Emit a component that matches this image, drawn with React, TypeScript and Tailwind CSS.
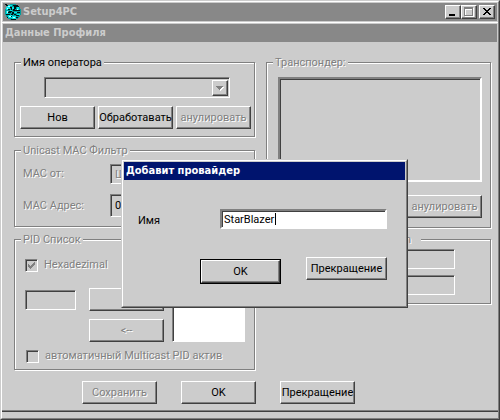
import { useState } from 'react';
import type { ButtonHTMLAttributes, InputHTMLAttributes, ReactNode } from 'react';
import clsx from 'clsx';

const etched = 'text-[#808080] [text-shadow:1px_1px_0_#fff]';
const sunken =
  'border border-t-[#808080] border-l-[#808080] border-r-white border-b-white shadow-[inset_1px_1px_0_#404040]';
const raised =
  'border border-t-white border-l-white border-r-[#404040] border-b-[#404040] shadow-[inset_-1px_-1px_0_#808080]';
const deep =
  'border-2 border-t-[#808080] border-l-[#808080] border-r-white border-b-white shadow-[inset_1px_1px_0_#404040]';

function Button({ className, disabled, ...props }: ButtonHTMLAttributes<HTMLButtonElement>) {
  return (
    <button
      type="button"
      disabled={disabled}
      className={clsx(
        'flex h-[23px] shrink-0 items-center justify-center whitespace-nowrap bg-[#ccc]',
        raised,
        disabled && etched,
        className ?? 'w-[75px]'
      )}
      {...props}
    />
  );
}

function Field({ className, ...props }: InputHTMLAttributes<HTMLInputElement>) {
  return <input type="text" className={clsx('bg-[#ccc] px-1 outline-none', sunken, className)} {...props} />;
}

interface GroupProps {
  title: ReactNode;
  disabled?: boolean;
  className?: string;
  children: ReactNode;
}

function Group({ title, disabled, className, children }: GroupProps) {
  return (
    <fieldset
      className={clsx(
        'min-w-0 border border-[#808080] shadow-[1px_1px_0_#fff,inset_1px_1px_0_#fff]',
        className
      )}
    >
      <legend className={clsx('ml-1.5 bg-[#ccc] px-0.5 leading-[15px]', disabled && etched)}>{title}</legend>
      {children}
    </fieldset>
  );
}

function Check({ label, checked = false, id }: { label: string; checked?: boolean; id: string }) {
  return (
    <div className="flex items-center gap-1.5">
      <span className="relative flex size-[13px] shrink-0">
        <input
          id={id}
          type="checkbox"
          defaultChecked={checked}
          disabled
          className={clsx('size-[13px] appearance-none bg-[#ccc]', sunken)}
        />
        {checked && (
          <svg viewBox="0 0 13 13" className="absolute inset-0 size-[13px]" shapeRendering="crispEdges">
            <path
              d="M3 5h1v3H3zM4 6h1v3H4zM5 7h1v3H5zM6 6h1v3H6zM7 5h1v3H7zM8 4h1v3H8zM9 3h1v3H9z"
              fill="#808080"
            />
          </svg>
        )}
      </span>
      <label htmlFor={id} className={clsx('whitespace-nowrap', etched)}>
        {label}
      </label>
    </div>
  );
}

function GlobeIcon() {
  return (
    <svg viewBox="0 0 16 16" className="size-4" shapeRendering="crispEdges" aria-hidden="true">
      <path d="M5 0h6v1h2v1h1v1h1v2h1v6h-1v2h-1v1h-1v1h-2v1H5v-1H3v-1H2v-1H1v-2H0V5h1V3h1V2h1V1h2z" fill="#009c9c" />
      <path d="M3 1h4v1H3zM2 2h3v1H2zM1 3h4v3H1zM7 3h2v2H7zM1 7h2v3H1zM5 6h2v1H5zM12 3h2v3h-2zM9 8h3v1H9zM3 11h4v3H3zM7 12h4v3H7zM12 10h3v1h-3z" fill="#00e8e8" />
      <path d="M3 2h2v1H3zM2 4h1v1H2zM2 7h1v2H2zM4 12h2v1H4zM8 13h2v1H8zM12 5h1v1h-1z" fill="#b8ffff" />
      <path d="M0 0h2v1H0zM1 1h2v1H1zM8 1h5v1H8zM9 2h5v1H9zM5 3h2v1H5zM9 3h2v2H9zM6 4h1v2H6zM3 5h2v1H3zM8 5h2v2H8zM4 7h3v1H4zM10 6h5v1h-5zM3 8h3v1H3zM7 8h2v2H7zM12 8h3v1h-3zM1 10h4v1H1zM9 10h2v1H9zM6 10h2v1H6zM11 11h3v1h-3zM2 13h1v1H2zM6 12h1v1H6zM11 13h2v1h-2zM6 15h5v1H6z" fill="#001414" />
    </svg>
  );
}

function TitleButtons() {
  const box = clsx('flex h-3.5 w-4 items-center justify-center bg-[#ccc]', raised);
  return (
    <div className="flex">
      <button type="button" aria-label="Minimize" className={box}>
        <svg viewBox="0 0 12 10" className="h-2.5 w-3" shapeRendering="crispEdges">
          <path d="M2 7h6v2H2z" />
        </svg>
      </button>
      <button type="button" aria-label="Maximize" disabled className={box}>
        <svg viewBox="0 0 12 10" className="h-2.5 w-3" shapeRendering="crispEdges">
          <path d="M2 1h9v9H2zM3 3v6h7V3z" fill="#fff" fillRule="evenodd" />
          <path d="M1 0h9v9H1zM2 2v6h7V2z" fill="#808080" fillRule="evenodd" />
        </svg>
      </button>
      <button type="button" aria-label="Close" className={clsx('ml-0.5', box)}>
        <svg viewBox="0 0 12 10" className="h-2.5 w-3" shapeRendering="crispEdges">
          <path d="M2 1h2v1H2zM8 1h2v1H8zM3 2h2v1H3zM7 2h2v1H7zM4 3h4v1H4zM5 4h2v1H5zM4 5h4v1H4zM3 6h2v1H3zM7 6h2v1H7zM2 7h2v1H2zM8 7h2v1H8z" />
        </svg>
      </button>
    </div>
  );
}

const titleFont = "font-['DejaVu_Sans_Condensed','DejaVu_Sans',sans-serif] text-[11px] font-bold";

function AddProviderDialog() {
  const [name, setName] = useState('StarBlazer');

  return (
    <div
      role="dialog"
      aria-labelledby="dialog-title"
      className="absolute top-[158px] left-[120px] w-[287px] border border-t-[#ccc] border-l-[#ccc] border-r-[#404040] border-b-[#404040] bg-[#ccc]"
    >
      <div className="border border-t-white border-l-white border-r-[#808080] border-b-[#808080] p-px pb-[22px]">
        <h2 id="dialog-title" className={clsx('h-[18px] bg-[#00146e] px-0.5 leading-[18px] text-white', titleFont)}>
          Добавит провайдер
        </h2>
        <div className="flex items-center pt-[29px] pr-[18px] pl-3.5">
          <label htmlFor="provider" className="w-[82px] pt-1">
            Имя
          </label>
          <div className="relative flex flex-1">
            <input
              id="provider"
              type="text"
              value={name}
              onChange={(e) => setName(e.target.value)}
              className={clsx('h-5 w-full bg-white px-0.5 caret-transparent outline-none', deep)}
            />
            <span className="absolute top-1 left-[55px] h-3 w-px bg-black" />
          </div>
        </div>
        <div className="flex justify-end gap-[25px] pt-7 pr-[18px]">
          <div className="mt-0.5 border border-black">
            <Button className="w-[79px]">OK</Button>
          </div>
          <Button className="w-[81px]">Прекращение</Button>
        </div>
      </div>
    </div>
  );
}

export default function App() {
  return (
    <div className="relative flex min-h-screen flex-col border border-t-[#ccc] border-l-[#ccc] border-r-[#404040] border-b-[#404040] bg-[#ccc] font-[Roboto,'Liberation_Sans',sans-serif] text-[11px] leading-4 text-black">
      <div className="flex flex-1 flex-col border border-t-white border-l-white border-r-[#808080] border-b-[#808080] pb-1.5">
        <header
          className={clsx(
            'm-px flex h-[18px] items-center justify-between bg-[#888] pr-0.5 pl-0.5 text-[#ccc]',
            titleFont
          )}
        >
          <div className="flex items-center gap-0.5">
            <GlobeIcon />
            <h1>Setup4PC</h1>
          </div>
          <TitleButtons />
        </header>

        <main className="flex-1 border-t border-b border-t-white border-b-[#404040] pt-px shadow-[inset_0_-1px_0_#808080]">
          <h2 className={clsx('mx-px h-[18px] bg-[#888] px-0.5 leading-[18px] text-[#ccc]', titleFont)}>
            Данные Профиля
          </h2>

          <div className="grid grid-cols-[241fr_225fr] gap-[11px] pt-[13px] pr-[7px] pl-3">
            <div className="flex min-w-0 flex-col">
              <Group title="Имя оператора" className="mb-1.5">
                <div className="px-[5px] pt-[7px] pb-[7px]">
                  <div className={clsx('relative mr-[19px] ml-6 h-[21px]', sunken)}>
                    <select aria-label="Имя оператора" disabled className="size-full appearance-none px-1">
                      <option></option>
                    </select>
                    <span
                      className={clsx(
                        'pointer-events-none absolute top-0.5 right-px flex h-4 w-4 items-center justify-center bg-[#ccc]',
                        raised
                      )}
                    >
                      <svg viewBox="0 0 8 5" className="h-[5px] w-2" shapeRendering="crispEdges">
                        <path d="M1 1h7v1H7v1H6v1H5v1H4V4H3V3H2V2H1z" fill="#fff" />
                        <path d="M0 0h7v1H6v1H5v1H4v1H3V3H2V2H1V1H0z" fill="#808080" />
                      </svg>
                    </span>
                  </div>
                  <div className="mt-2 flex gap-[3px]">
                    <Button>Нов</Button>
                    <Button>Обработавать</Button>
                    <Button disabled>анулировать</Button>
                  </div>
                </div>
              </Group>

              <Group title="Unicast MAC Фильтр" disabled className="mb-[5px]">
                <div className="grid grid-cols-[87px_1fr] items-center gap-y-2.5 pt-1.5 pr-5 pb-[9px] pl-2">
                  <label htmlFor="mac-from" className={etched}>
                    MAC от:
                  </label>
                  <Field id="mac-from" defaultValue="Широковещательный" disabled className={clsx('h-5', etched)} />
                  <label htmlFor="mac" className={etched}>
                    MAC Адрес:
                  </label>
                  <Field id="mac" defaultValue="00" disabled className="h-[23px]" />
                </div>
              </Group>

              <Group title="PID Список" disabled>
                <div className="pt-2.5 pb-[5px] pl-2.5">
                  <Check id="hex" label="Hexadezimal" checked />
                  <div className="mt-[13px] flex h-[56px]">
                    <Field aria-label="PID" disabled className="mt-1 h-5 w-[51px]" />
                    <div className="mt-0.5 ml-[13px] flex flex-col gap-2">
                      <Button disabled aria-label="Add PID" />
                      <Button disabled>&lt;--</Button>
                    </div>
                    <div role="listbox" className={clsx('ml-2 w-[73px] bg-white', sunken)} />
                  </div>
                  <div className="mt-1.5 ml-px">
                    <Check id="multicast" label="автоматичный Multicast PID актив" />
                  </div>
                </div>
              </Group>
            </div>

            <div className="flex min-w-0 flex-col">
              <Group title="Транспондер:" disabled className="mb-1">
                <div className="flex flex-col items-end pt-[7px] pr-2 pb-[9px] pl-[11px]">
                  <div role="listbox" className={clsx('h-[105px] w-full', deep)} />
                  <Button disabled className="mt-[13px] w-[75px]">
                    анулировать
                  </Button>
                </div>
              </Group>
              <Group
                title={<span className="block w-[144px] pr-2 text-right">Transponder Information</span>}
                disabled
              >
                <div className="flex flex-col items-end gap-1.5 pt-0.5 pr-[35px] pb-2">
                  <Field aria-label="Частота" disabled className="h-5 w-[120px]" />
                  <Field aria-label="Скорость" disabled className="h-5 w-[120px]" />
                </div>
              </Group>
            </div>
          </div>

          <div className="flex gap-6 pt-[11px] pb-[7px] pl-20">
            <Button disabled>Сохранить</Button>
            <Button>OK</Button>
            <Button>Прекращение</Button>
          </div>
        </main>
      </div>
      <AddProviderDialog />
    </div>
  );
}
